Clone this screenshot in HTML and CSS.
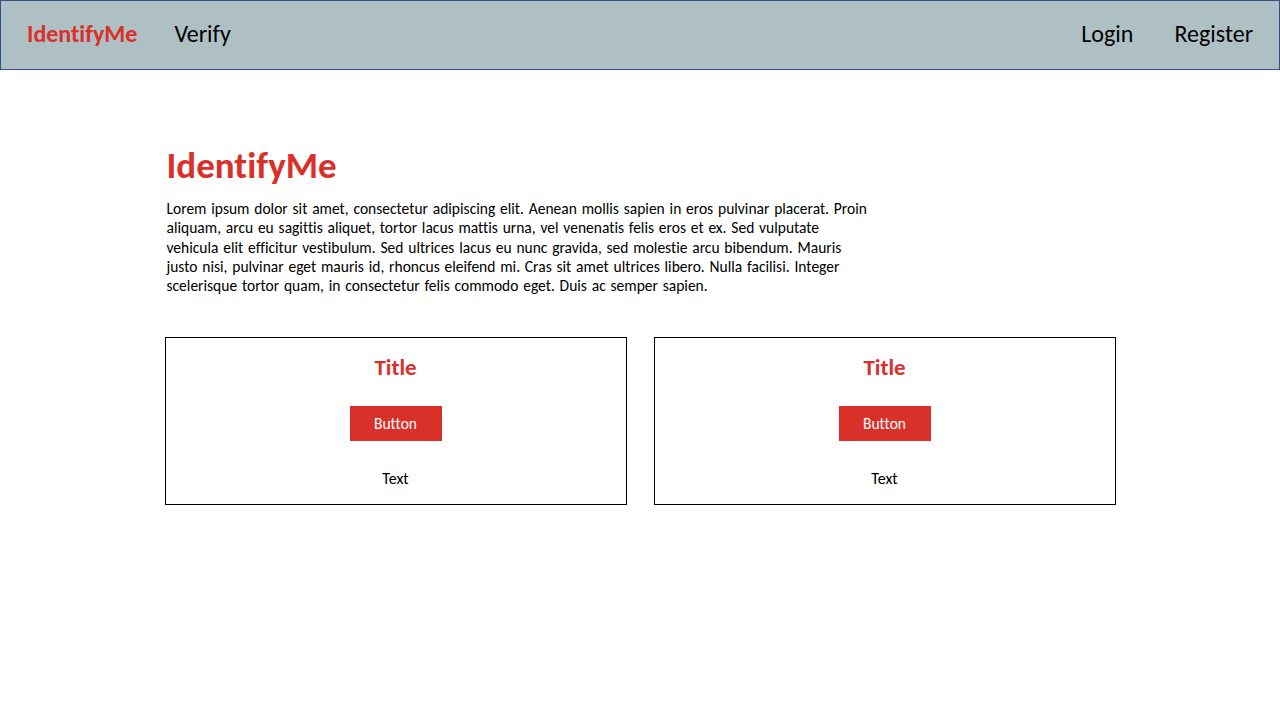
FILE: index.html
```html
<!DOCTYPE html>
<html lang="en">
<head>
<meta charset="utf-8">
<title>IdentifyMe</title>
<link rel="stylesheet" href="styles.css">
</head>
<body>
<header class="navbar">
  <nav class="nav-left">
    <a class="brand" href="#">IdentifyMe</a>
    <a class="nav-link" href="#">Verify</a>
  </nav>
  <nav class="nav-right">
    <a class="nav-link" href="#">Login</a>
    <a class="nav-link" href="#">Register</a>
  </nav>
</header>
<main class="content">
  <section class="hero">
    <h1 class="hero-title">IdentifyMe</h1>
    <p class="hero-text">Lorem ipsum dolor sit amet, consectetur adipiscing elit. Aenean mollis sapien in eros pulvinar placerat. Proin<br>aliquam, arcu eu sagittis aliquet, tortor lacus mattis urna, vel venenatis felis eros et ex. Sed vulputate<br>vehicula elit efficitur vestibulum. Sed ultrices lacus eu nunc gravida, sed molestie arcu bibendum. Mauris<br>justo nisi, pulvinar eget mauris id, rhoncus eleifend mi. Cras sit amet ultrices libero. Nulla facilisi. Integer<br>scelerisque tortor quam, in consectetur felis commodo eget. Duis ac semper sapien.</p>
  </section>
  <section class="cards">
    <div class="card">
      <h2 class="card-title">Title</h2>
      <button class="card-button">Button</button>
      <p class="card-text">Text</p>
    </div>
    <div class="card">
      <h2 class="card-title">Title</h2>
      <button class="card-button">Button</button>
      <p class="card-text">Text</p>
    </div>
  </section>
</main>
</body>
</html>
```
FILE: styles.css
```css
* { box-sizing: border-box; }
html, body { margin: 0; padding: 0; background: #ffffff; }
body {
  font-family: Carlito, Calibri, Lato, "Open Sans", sans-serif;
  font-variant-ligatures: none;
  color: #000;
}
a { text-decoration: none; }

.navbar {
  height: 70px;
  background: #afc0c5;
  border: 1px solid #2f528f;
  display: flex;
  align-items: center;
  justify-content: space-between;
  padding: 0 26px 3px 26px;
}
.nav-left, .nav-right {
  display: flex;
  align-items: center;
  gap: 37px;
}
.nav-right { gap: 41px; }
.brand {
  color: #d9302a;
  font-weight: 700;
  font-size: 24px;
}
.nav-link {
  color: #000;
  font-size: 24px;
}

.content {
  width: 951px;
  margin: 0 auto;
  padding-top: 74px;
}
.hero { padding-left: 2px; }
.hero-title {
  margin: 0;
  color: #d9302a;
  font-size: 37px;
  font-weight: 700;
  line-height: 44px;
}
.hero-text {
  margin: 11px 0 0 0;
  font-size: 15.5px;
  word-spacing: 1.3px;
  line-height: 19.3px;
  white-space: nowrap;
}

.cards {
  margin-top: 42px;
  display: flex;
  gap: 27px;
}
.card {
  width: 462px;
  height: 168px;
  border: 1px solid #000;
  display: flex;
  flex-direction: column;
  align-items: center;
  padding-top: 14px;
}
.card-title {
  margin: 0;
  color: #d9302a;
  font-size: 23px;
  font-weight: 700;
  line-height: 30px;
}
.card-button {
  margin-top: 24px;
  width: 92px;
  height: 35px;
  border: none;
  background: #d9302a;
  color: #fff;
  font-family: inherit;
  font-variant-ligatures: none;
  font-size: 15.5px;
  padding: 0;
}
.card-text {
  margin: 28px 0 0 0;
  font-size: 16px;
  line-height: 20px;
}
```
